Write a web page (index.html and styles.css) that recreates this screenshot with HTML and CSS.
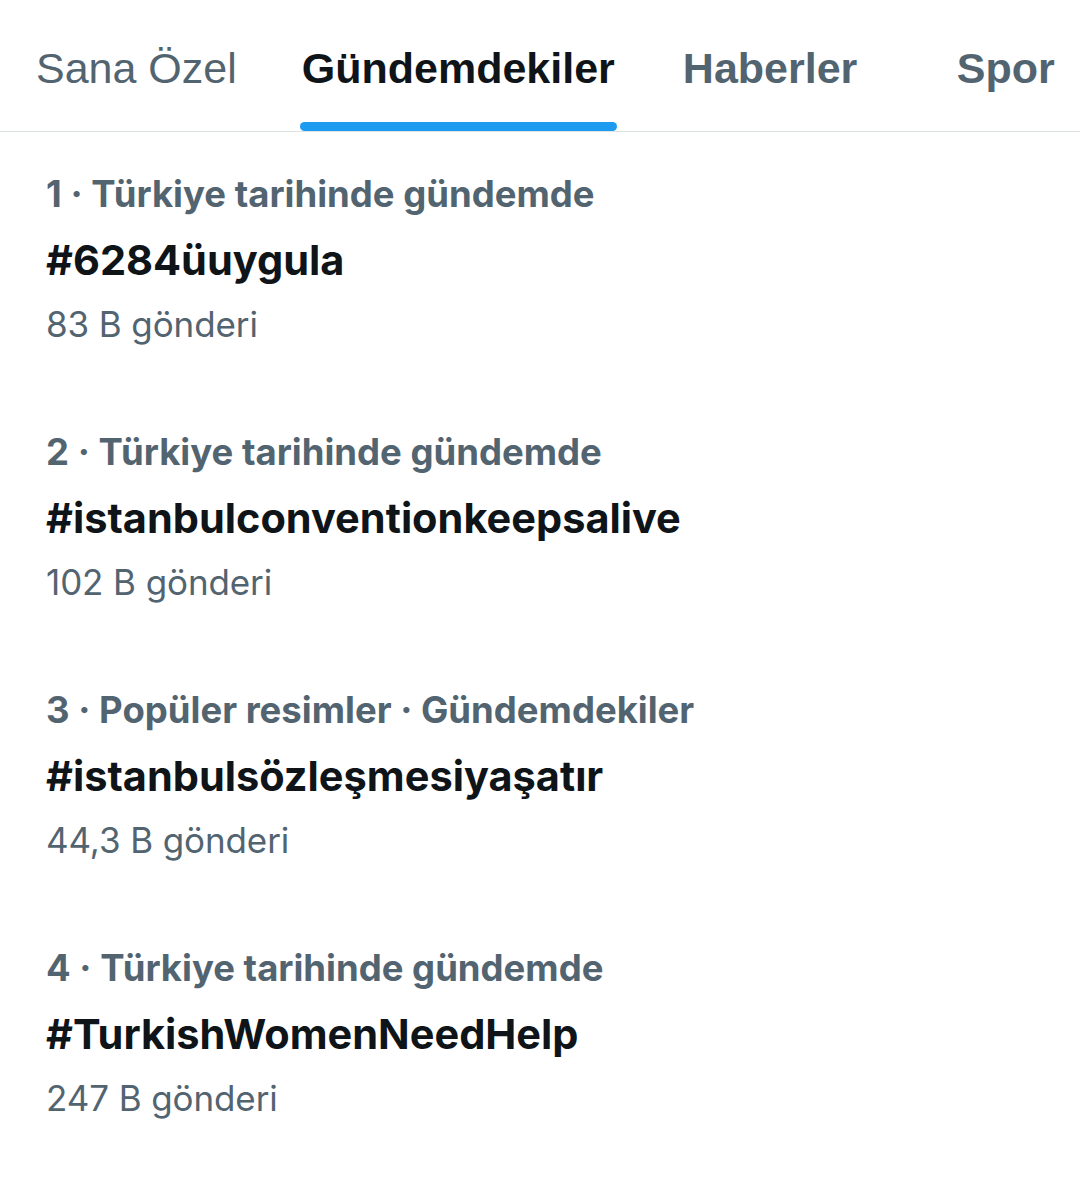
FILE: index.html
```html
<!DOCTYPE html>
<html lang="tr">
<head>
  <meta charset="UTF-8">
  <title>Gündemdekiler</title>
  <link rel="stylesheet" href="styles.css">
</head>
<body>
  <div class="tabs">
    <div class="tab first"><span class="tab-text">Sana Özel</span></div>
    <div class="tab active"><span class="tab-text">Gündemdekiler<span class="indicator"></span></span></div>
    <div class="tab"><span class="tab-text">Haberler</span></div>
    <div class="tab"><span class="tab-text">Spor</span></div>
  </div>
  <div class="trend-list">
    <div class="trend">
      <div class="trend-cat">1 · Türkiye tarihinde gündemde</div>
      <div class="trend-name">#6284üuygula</div>
      <div class="trend-count">83 B gönderi</div>
    </div>
    <div class="trend">
      <div class="trend-cat">2 · Türkiye tarihinde gündemde</div>
      <div class="trend-name">#istanbulconventionkeepsalive</div>
      <div class="trend-count">102 B gönderi</div>
    </div>
    <div class="trend">
      <div class="trend-cat">3 · Popüler resimler · Gündemdekiler</div>
      <div class="trend-name">#istanbulsözleşmesiyaşatır</div>
      <div class="trend-count">44,3 B gönderi</div>
    </div>
    <div class="trend">
      <div class="trend-cat">4 · Türkiye tarihinde gündemde</div>
      <div class="trend-name">#TurkishWomenNeedHelp</div>
      <div class="trend-count">247 B gönderi</div>
    </div>
  </div>
</body>
</html>
```

FILE: styles.css
```css
  body {
    margin: 0;
    background: #fff;
    font-family: Inter, 'Noto Sans', sans-serif;
    overflow: hidden;
  }
  .tabs {
    display: flex;
    height: 131px;
    border-bottom: 1px solid #dde2e5;
    overflow: hidden;
  }
  .tab {
    flex: 0 0 auto;
    min-width: 161px;
    padding: 44px 34px 0 34px;
    text-align: center;
    font-family: 'Liberation Sans', Arial, sans-serif;
    font-size: 43px;
    line-height: 48px;
    color: #536471;
  }
  .tab.first {
    padding-left: 36px;
    padding-right: 31px;
  }
  .tab.active {
    color: #0f1419;
    font-weight: bold;
  }
  .tab:nth-child(3), .tab:nth-child(4) {
    font-weight: bold;
  }
  .tab-text {
    display: inline-block;
  }
  .indicator {
    display: block;
    height: 9px;
    margin: 30px -2px 0 -2px;
    border-radius: 5px;
    background: #1d9bf0;
  }
  .trend-list {
    padding: 40px 46px 0 46px;
  }
  .trend {
    padding-bottom: 86px;
  }
  .trend-cat {
    font-size: 36.5px;
    line-height: 44px;
    font-weight: bold;
    color: #536471;
  }
  .trend-name {
    font-size: 41.5px;
    line-height: 88px;
    font-weight: bold;
    color: #0f1419;
  }
  .trend-count {
    font-size: 35px;
    line-height: 40px;
    letter-spacing: -0.1px;
    color: #536471;
  }
```
